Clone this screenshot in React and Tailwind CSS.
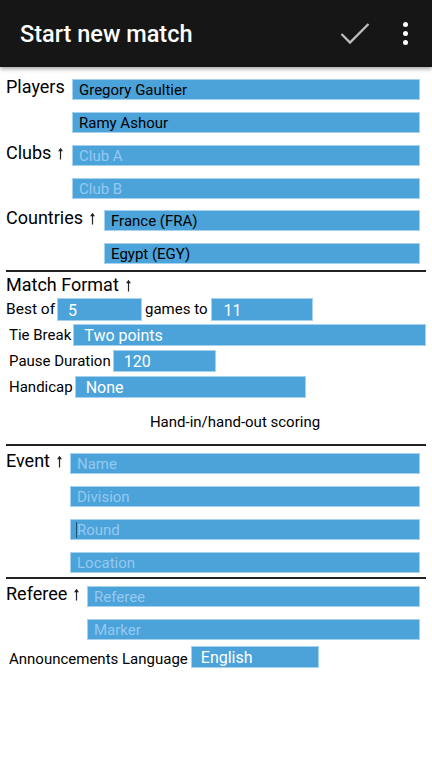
import React from 'react';

const font = { fontFamily: 'Roboto, "Liberation Sans", sans-serif' };

function Field({ value, placeholder, className = '', textClass = 'pl-[6px] text-[15px]', caret }) {
  return (
    <div className={`flex items-center overflow-hidden border border-[#a6d2f0] bg-[#4ba3da] ${className}`}>
      {caret && <span className="ml-[5px] h-[16px] w-px bg-[#1d4f73]" />}
      {value ? (
        <span className={`${textClass} pt-[2px]`}>{value}</span>
      ) : (
        <span className={`${caret ? 'pl-0 text-[15px]' : textClass} pt-[2px] !text-[#95c9ef]`}>{placeholder}</span>
      )}
    </div>
  );
}

function Arrow() {
  return (
    <svg width="7" height="13" viewBox="0 0 7 13" className="ml-[6px] inline-block align-[-1px]">
      <path d="M3.5 12.5 V3" stroke="#222" strokeWidth="1.2" />
      <path d="M1 4.2 L3.5 0.8 L6 4.2 Z" fill="#222" />
    </svg>
  );
}

function Divider({ className = '' }) {
  return <div className={`mx-[6px] h-[2px] bg-[#222] ${className}`} />;
}

export default function App() {
  return (
    <div className="min-h-[768px] w-[432px] bg-white" style={font}>
      {/* toolbar */}
      <div className="relative flex h-[67px] items-center bg-[#161616] shadow-[0_2px_4px_rgba(0,0,0,0.35)]">
        <h1 className="ml-[20px] flex-1 pt-[3px] text-[23.5px] font-medium text-white">Start new match</h1>
        <svg width="30" height="22" viewBox="0 0 30 22" className="mr-[33px]">
          <path d="M1.5 11 L10 19.5 L28.5 1" fill="none" stroke="#bdbdbd" strokeWidth="2.3" />
        </svg>
        <div className="mr-[24px] flex flex-col gap-[4px]">
          <span className="h-[5px] w-[5px] rounded-full bg-white" />
          <span className="h-[5px] w-[5px] rounded-full bg-white" />
          <span className="h-[5px] w-[5px] rounded-full bg-white" />
        </div>
      </div>

      {/* players / clubs / countries */}
      <div className="mt-[12px] grid grid-cols-[66px_1fr] gap-y-[12px] pl-[6px] pr-[12px]">
        <span className="-mt-[3px] text-[18px] leading-[22px] text-black">Players</span>
        <Field value="Gregory Gaultier" className="h-[21px]" />
        <span />
        <Field value="Ramy Ashour" className="h-[21px]" />
        <span className="-mt-[3px] text-[18px] leading-[22px] text-black">Clubs<Arrow /></span>
        <Field placeholder="Club A" className="h-[21px]" />
        <span />
        <Field placeholder="Club B" className="h-[21px]" />
      </div>
      <div className="mt-[11px] grid grid-cols-[98px_1fr] gap-y-[12px] pl-[6px] pr-[12px]">
        <span className="-mt-[3px] text-[18px] leading-[22px] text-black">Countries<Arrow /></span>
        <Field value="France (FRA)" className="h-[21px]" />
        <span />
        <Field value="Egypt (EGY)" className="h-[21px]" />
      </div>
      <Divider className="mt-[6px]" />

      {/* match format */}
      <div className="mt-[2px] pl-[6px] text-[18px] leading-[22px] text-black">Match Format<Arrow /></div>
      <div className="mt-[2px] flex h-[23px] items-center pl-[6px]">
        <span className="text-[15.5px] text-black">Best of</span>
        <Field value="5" className="ml-[2px] h-[23px] w-[85px]" textClass="pl-[10px] text-[16px] text-white" />
        <span className="ml-[3px] text-[15px] text-black">games to</span>
        <Field value="11" className="ml-[3px] h-[23px] w-[102px]" textClass="pl-[12px] text-[16px] text-white" />
      </div>
      <div className="mt-[3px] flex h-[22px] items-center pl-[9px] pr-[6px]">
        <span className="text-[15px] text-black">Tie Break</span>
        <Field value="Two points" className="ml-[2px] h-[22px] flex-1" textClass="pl-[10px] text-[16px] text-white" />
      </div>
      <div className="mt-[4px] flex h-[22px] items-center pl-[9px]">
        <span className="text-[15px] text-black">Pause Duration</span>
        <Field value="120" className="ml-[2px] h-[22px] w-[103px]" textClass="pl-[10px] text-[16px] text-white" />
      </div>
      <div className="mt-[4px] flex h-[22px] items-center pl-[9px]">
        <span className="text-[15px] text-black">Handicap</span>
        <Field value="None" className="ml-[2px] h-[22px] w-[231px]" textClass="pl-[10px] text-[16px] text-white" />
      </div>
      <div className="mt-[14px] pl-[38px] text-center text-[15px] leading-[20px] text-black">Hand-in/hand-out scoring</div>
      <Divider className="mt-[12px]" />

      {/* event */}
      <div className="mt-[7px] grid grid-cols-[64px_1fr] gap-y-[12px] pl-[6px] pr-[12px]">
        <span className="-mt-[3px] text-[18px] leading-[22px] text-black">Event<Arrow /></span>
        <Field placeholder="Name" className="h-[21px]" textClass="pl-[6px] text-[15px]" />
        <span />
        <Field placeholder="Division" className="h-[21px]" textClass="pl-[6px] text-[15px]" />
        <span />
        <Field placeholder="Round" className="h-[21px]" caret />
        <span />
        <Field placeholder="Location" className="h-[21px]" textClass="pl-[6px] text-[15px]" />
      </div>
      <Divider className="mt-[4px]" />

      {/* referee */}
      <div className="mt-[7px] grid grid-cols-[81px_1fr] gap-y-[12px] pl-[6px] pr-[12px]">
        <span className="-mt-[3px] text-[18px] leading-[22px] text-black">Referee<Arrow /></span>
        <Field placeholder="Referee" className="h-[21px]" textClass="pl-[6px] text-[15px]" />
        <span />
        <Field placeholder="Marker" className="h-[21px]" textClass="pl-[6px] text-[15px]" />
      </div>
      <div className="mt-[6px] flex h-[22px] items-center pl-[9px]">
        <span className="mt-[4px] text-[15px] text-black">Announcements Language</span>
        <Field value="English" className="ml-[3px] h-[22px] w-[128px]" textClass="pl-[9px] text-[16px] text-white" />
      </div>
    </div>
  );
}
